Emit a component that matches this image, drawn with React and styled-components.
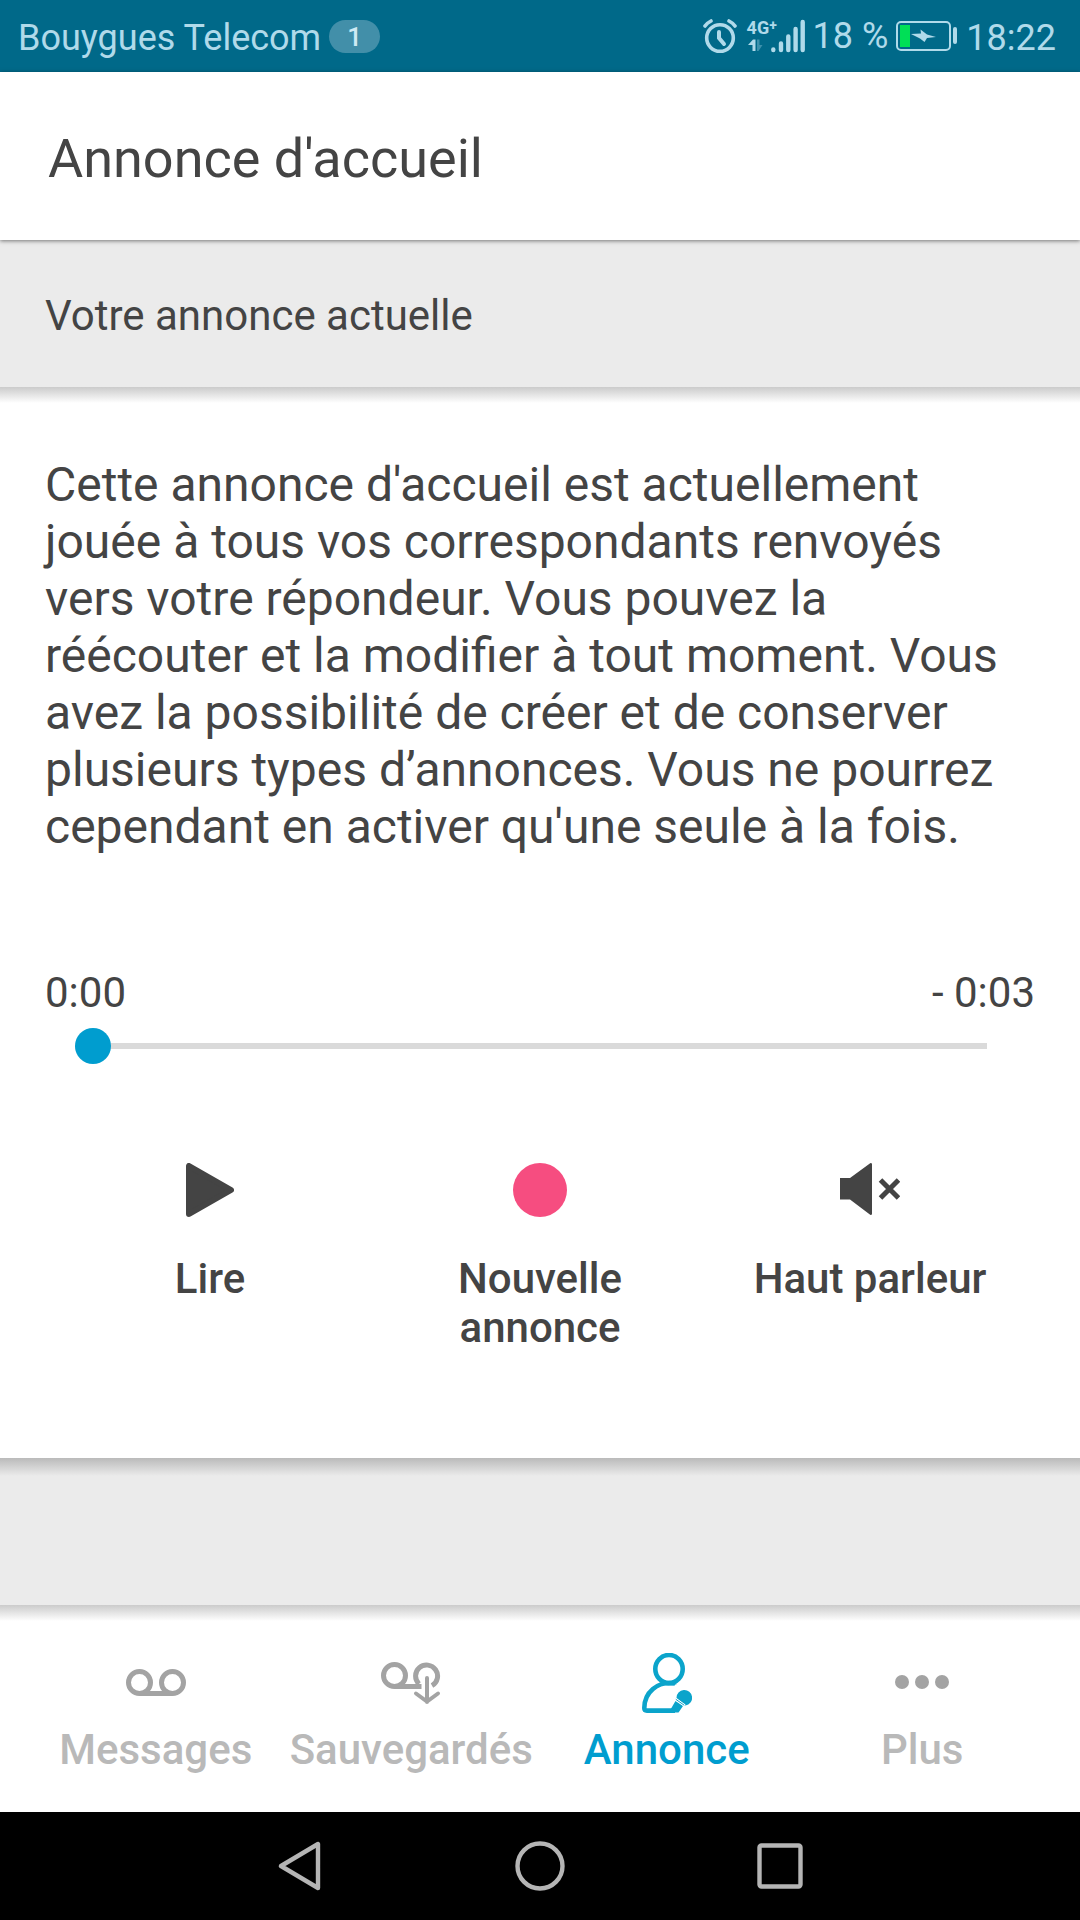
import { useState } from "react";
import styled, { createGlobalStyle } from "styled-components";

const GlobalStyle = createGlobalStyle`
  * {
    box-sizing: border-box;
  }
  body {
    margin: 0;
    background: #fff;
    color: #444;
    font-family: Roboto, "Liberation Sans", sans-serif;
  }
  button, input {
    font: inherit;
    color: inherit;
    margin: 0;
    padding: 0;
    border: none;
    background: none;
  }
`;

const Screen = styled.div`
  display: flex;
  flex-direction: column;
  min-height: 100vh;
`;

const StatusBar = styled.div`
  display: flex;
  align-items: center;
  justify-content: space-between;
  height: 72px;
  padding: 0 24px 0 18px;
  background: #006989;
  color: #b0daea;
  font-size: 36px;
  line-height: 42px;
`;

const StatusGroup = styled.div`
  display: flex;
  align-items: center;
  gap: ${props => props.$gap}px;
`;

const StatusText = styled.span`
  padding-top: ${props => (props.$low ? 3 : 0)}px;
  white-space: nowrap;
`;

const Count = styled.span`
  width: 51px;
  height: 33px;
  border-radius: 17px;
  background: #428fa9;
  color: #cfeaf4;
  font-size: 26px;
  font-weight: 500;
  line-height: 34px;
  text-align: center;
`;

const Network = styled.div`
  display: flex;
  flex-direction: column;
  align-items: flex-start;
  width: 24px;
  height: 36px;
  font-size: 18px;
  font-weight: 700;
  line-height: 20px;
  white-space: nowrap;
  sup {
    font-size: 14px;
    line-height: 0;
    vertical-align: 4px;
  }
`;

const Header = styled.header`
  position: relative;
  height: 168px;
  padding: 55px 48px 0;
  background: #fff;
  box-shadow: 0 1px 4px rgba(0, 0, 0, 0.5);
`;

const Title = styled.h1`
  margin: 0;
  font-size: 54px;
  font-weight: 400;
  line-height: 64px;
`;

const SectionTitle = styled.h2`
  margin: 0;
  height: 147px;
  padding: 51px 45px 0;
  background: #ebebeb;
  font-size: 42px;
  font-weight: 400;
  line-height: 49px;
`;

const Card = styled.main`
  flex: 1;
  padding: 69px 45px 0;
  background: linear-gradient(#cbcbcb, #fff 16px);
`;

const Description = styled.p`
  margin: 0;
  font-size: 48px;
  line-height: 57px;
`;

const Times = styled.div`
  display: flex;
  justify-content: space-between;
  margin-top: 113px;
  font-size: 42px;
  line-height: 49px;
`;

const Seek = styled.div`
  display: flex;
  padding: 11px 48px 0 30px;
`;

const SeekBar = styled.input`
  appearance: none;
  flex: 1;
  height: 36px;
  background: linear-gradient(#dadada, #dadada) center / 100% 6px no-repeat;
  &::-webkit-slider-thumb {
    appearance: none;
    width: 36px;
    height: 36px;
    border-radius: 50%;
    background: #009dcf;
  }
`;

const Actions = styled.div`
  display: grid;
  grid-template-columns: repeat(3, 1fr);
  align-items: start;
  margin-top: 99px;
`;

const Action = styled.button`
  display: flex;
  flex-direction: column;
  align-items: center;
  gap: 37px;
  padding: 0 30px;
  font-size: 42px;
  font-weight: 500;
  line-height: 49px;
`;

const Footer = styled.div`
  height: 147px;
  background: linear-gradient(#bababa, #ebebeb 18px);
`;

const Tabs = styled.nav`
  display: grid;
  grid-template-columns: repeat(4, 1fr);
  padding: 48px 30px 38px 28px;
  background: linear-gradient(#cbcbcb, #fff 16px);
`;

const Tab = styled.a`
  display: flex;
  flex-direction: column;
  align-items: center;
  gap: 12px;
  color: ${props => (props.$active ? "#009dcf" : "#b9b9b9")};
  font-size: 42px;
  font-weight: 500;
  line-height: 49px;
  text-decoration: none;
  svg {
    color: ${props => (props.$active ? "#0ba4cb" : "#a3a3a3")};
  }
`;

const SystemBar = styled.div`
  display: flex;
  justify-content: center;
  height: 108px;
  background: #000;
  color: #b5b5b5;
`;

const SystemButton = styled.button`
  display: flex;
  align-items: center;
  justify-content: center;
  width: 240px;
`;

const AlarmIcon = () => (
  <svg width="34" height="36" viewBox="0 0 34 36" fill="none" stroke="currentColor" strokeLinecap="round">
    <circle cx="17" cy="20" r="13.3" strokeWidth="3.6" />
    <path d="M16 14v6l5 6" strokeWidth="4" />
    <path d="M2 8Q4 5 8 3M32 8Q30 5 26 3" strokeWidth="3.6" />
  </svg>
);

const DataArrows = () => (
  <svg width="18" height="14" viewBox="0 0 18 14">
    <path d="M1 7 6 1.500h2.500V13H5.500V7z" fill="currentColor" />
    <path d="M10 1.500h2.500V7h3L11.500 13H10z" fill="#3d91ac" />
  </svg>
);

const SignalIcon = () => (
  <svg width="34" height="36" viewBox="0 0 34 36" stroke="currentColor" strokeWidth="4.4" strokeLinecap="round">
    <path d="M2.3 31.500v.5M10 25.500V32M17.300 18.500V32M24.600 11V32M31.700 4V32" />
  </svg>
);

const BatteryIcon = () => (
  <svg width="62" height="32" viewBox="0 0 62 32">
    <rect x="1" y="2" width="53" height="28" rx="4" fill="none" stroke="currentColor" strokeWidth="2" />
    <path d="M59 9v13" stroke="currentColor" strokeWidth="4" strokeLinecap="round" />
    <path d="M4 5h10v22H4z" fill="#00df56" />
    <path d="m15 14 10-.5L24.500 9.500 31 14.500 40 17l-9 1-2.500 4L24 18.500z" fill="currentColor" />
  </svg>
);

const PlayIcon = () => (
  <svg width="48" height="54" viewBox="0 0 48 54">
    <path d="M3 3v48l42-24z" fill="currentColor" stroke="currentColor" strokeWidth="6" strokeLinejoin="round" />
  </svg>
);

const RecordIcon = () => (
  <svg width="54" height="54" viewBox="0 0 54 54">
    <circle cx="27" cy="27" r="27" fill="#f64d80" />
  </svg>
);

const SpeakerOffIcon = () => (
  <svg width="60" height="54" viewBox="0 0 60 54">
    <path d="M0 15h10L30.500 0Q32 0 32 1v50q0 1-1.500 1L10 36.500H0z" fill="currentColor" />
    <path d="m40.500 17 18 18m0-18-18 18" stroke="currentColor" strokeWidth="5" />
  </svg>
);

const VoicemailIcon = () => (
  <svg width="60" height="60" viewBox="0 0 60 60" fill="none" stroke="currentColor" strokeWidth="5">
    <circle cx="13.500" cy="29.500" r="11" />
    <circle cx="46.500" cy="29.500" r="11" />
    <path d="M13.500 40.500h33" />
  </svg>
);

const SavedIcon = () => (
  <svg width="60" height="60" viewBox="0 0 60 60" fill="none" stroke="currentColor" strokeWidth="5">
    <circle cx="13.500" cy="22.500" r="11" />
    <path d="M13.500 33.500H40.500M38 31A11 11 0 1 1 51 32.600" />
    <path d="M46 25v24M35 40.500l11 8 11-8" strokeWidth="4" strokeLinecap="round" />
  </svg>
);

const AnnounceIcon = () => (
  <svg width="50" height="60" viewBox="0 0 50 60" fill="none" stroke="currentColor">
    <ellipse cx="27" cy="16" rx="13.700" ry="14" strokeWidth="4.600" />
    <path d="M33 30.500C15 27.500 2.300 40 2.300 55q0 2.600 2.600 2.600H33" strokeWidth="4.600" />
    <path d="M19 29.500q8 2.500 15 0" strokeWidth="3.500" />
    <path d="M28.500 56.500 33.500 48l7.500 5-4.500 6.500h-8z" fill="currentColor" stroke="none" />
    <path d="M34.500 45a7.800 7.800 0 1 1 9 7.500z" fill="currentColor" stroke="none" />
    <path d="m33.800 46.300 9 6.200" stroke="#fff" strokeWidth="2.400" />
    <path d="m33.800 46.300 8.500 6" strokeWidth="1" />
  </svg>
);

const MoreIcon = () => (
  <svg width="54" height="60" viewBox="0 0 54 60" fill="currentColor">
    <circle cx="7" cy="29" r="7" />
    <circle cx="27" cy="29" r="7" />
    <circle cx="47" cy="29" r="7" />
  </svg>
);

const BackIcon = () => (
  <svg width="44" height="50" viewBox="0 0 44 50" fill="none" stroke="currentColor" strokeWidth="4.400">
    <path d="M40 3v44L3 25z" strokeLinejoin="round" />
  </svg>
);

const HomeIcon = () => (
  <svg width="50" height="50" viewBox="0 0 50 50" fill="none" stroke="currentColor" strokeWidth="4.400">
    <circle cx="25" cy="25" r="22.500" />
  </svg>
);

const RecentIcon = () => (
  <svg width="46" height="46" viewBox="0 0 46 46" fill="none" stroke="currentColor" strokeWidth="4.400">
    <rect x="2.500" y="2.500" width="41" height="41" rx="2" />
  </svg>
);

const tabs = [
  { label: "Messages", href: "#messages", Icon: VoicemailIcon },
  { label: "Sauvegardés", href: "#sauvegardes", Icon: SavedIcon },
  { label: "Annonce", href: "#annonce", Icon: AnnounceIcon, active: true },
  { label: "Plus", href: "#plus", Icon: MoreIcon }
];

const DURATION = 3;

const formatTime = seconds => `0:${String(seconds).padStart(2, "0")}`;

const Player = () => {
  const [position, setPosition] = useState(0);
  return (
    <>
      <Times>
        <span>{formatTime(position)}</span>
        <span>- {formatTime(DURATION - position)}</span>
      </Times>
      <Seek>
        <SeekBar
          type="range"
          aria-label="Position de lecture"
          min="0"
          max={DURATION}
          value={position}
          onChange={e => setPosition(Number(e.target.value))}
        />
      </Seek>
      <Actions>
        <Action type="button">
          <PlayIcon />
          Lire
        </Action>
        <Action type="button">
          <RecordIcon />
          Nouvelle annonce
        </Action>
        <Action type="button">
          <SpeakerOffIcon />
          Haut parleur
        </Action>
      </Actions>
    </>
  );
};

const App = () => (
  <Screen>
    <GlobalStyle />
    <StatusBar>
      <StatusGroup $gap={8}>
        <StatusText $low>Bouygues Telecom</StatusText>
        <Count>1</Count>
      </StatusGroup>
      <StatusGroup $gap={8}>
        <StatusGroup $gap={10}>
          <AlarmIcon />
          <StatusGroup $gap={0}>
            <Network>
              <span>
                4G<sup>+</sup>
              </span>
              <DataArrows />
            </Network>
            <SignalIcon />
          </StatusGroup>
        </StatusGroup>
        <StatusText>18 %</StatusText>
        <BatteryIcon />
        <StatusText $low>18:22</StatusText>
      </StatusGroup>
    </StatusBar>
    <Header>
      <Title>Annonce d'accueil</Title>
    </Header>
    <SectionTitle>Votre annonce actuelle</SectionTitle>
    <Card>
      <Description>
        Cette annonce d'accueil est actuellement jouée à tous vos correspondants
        renvoyés vers votre répondeur. Vous pouvez la réécouter et la modifier à
        tout moment. Vous avez la possibilité de créer et de conserver plusieurs
        types d’annonces. Vous ne pourrez cependant en activer qu'une seule à la
        fois.
      </Description>
      <Player />
    </Card>
    <Footer />
    <Tabs>
      {tabs.map(({ label, href, Icon, active }) => (
        <Tab key={label} href={href} $active={active}>
          <Icon />
          {label}
        </Tab>
      ))}
    </Tabs>
    <SystemBar>
      <SystemButton type="button" aria-label="Retour">
        <BackIcon />
      </SystemButton>
      <SystemButton type="button" aria-label="Accueil">
        <HomeIcon />
      </SystemButton>
      <SystemButton type="button" aria-label="Applications récentes">
        <RecentIcon />
      </SystemButton>
    </SystemBar>
  </Screen>
);

export default App;
